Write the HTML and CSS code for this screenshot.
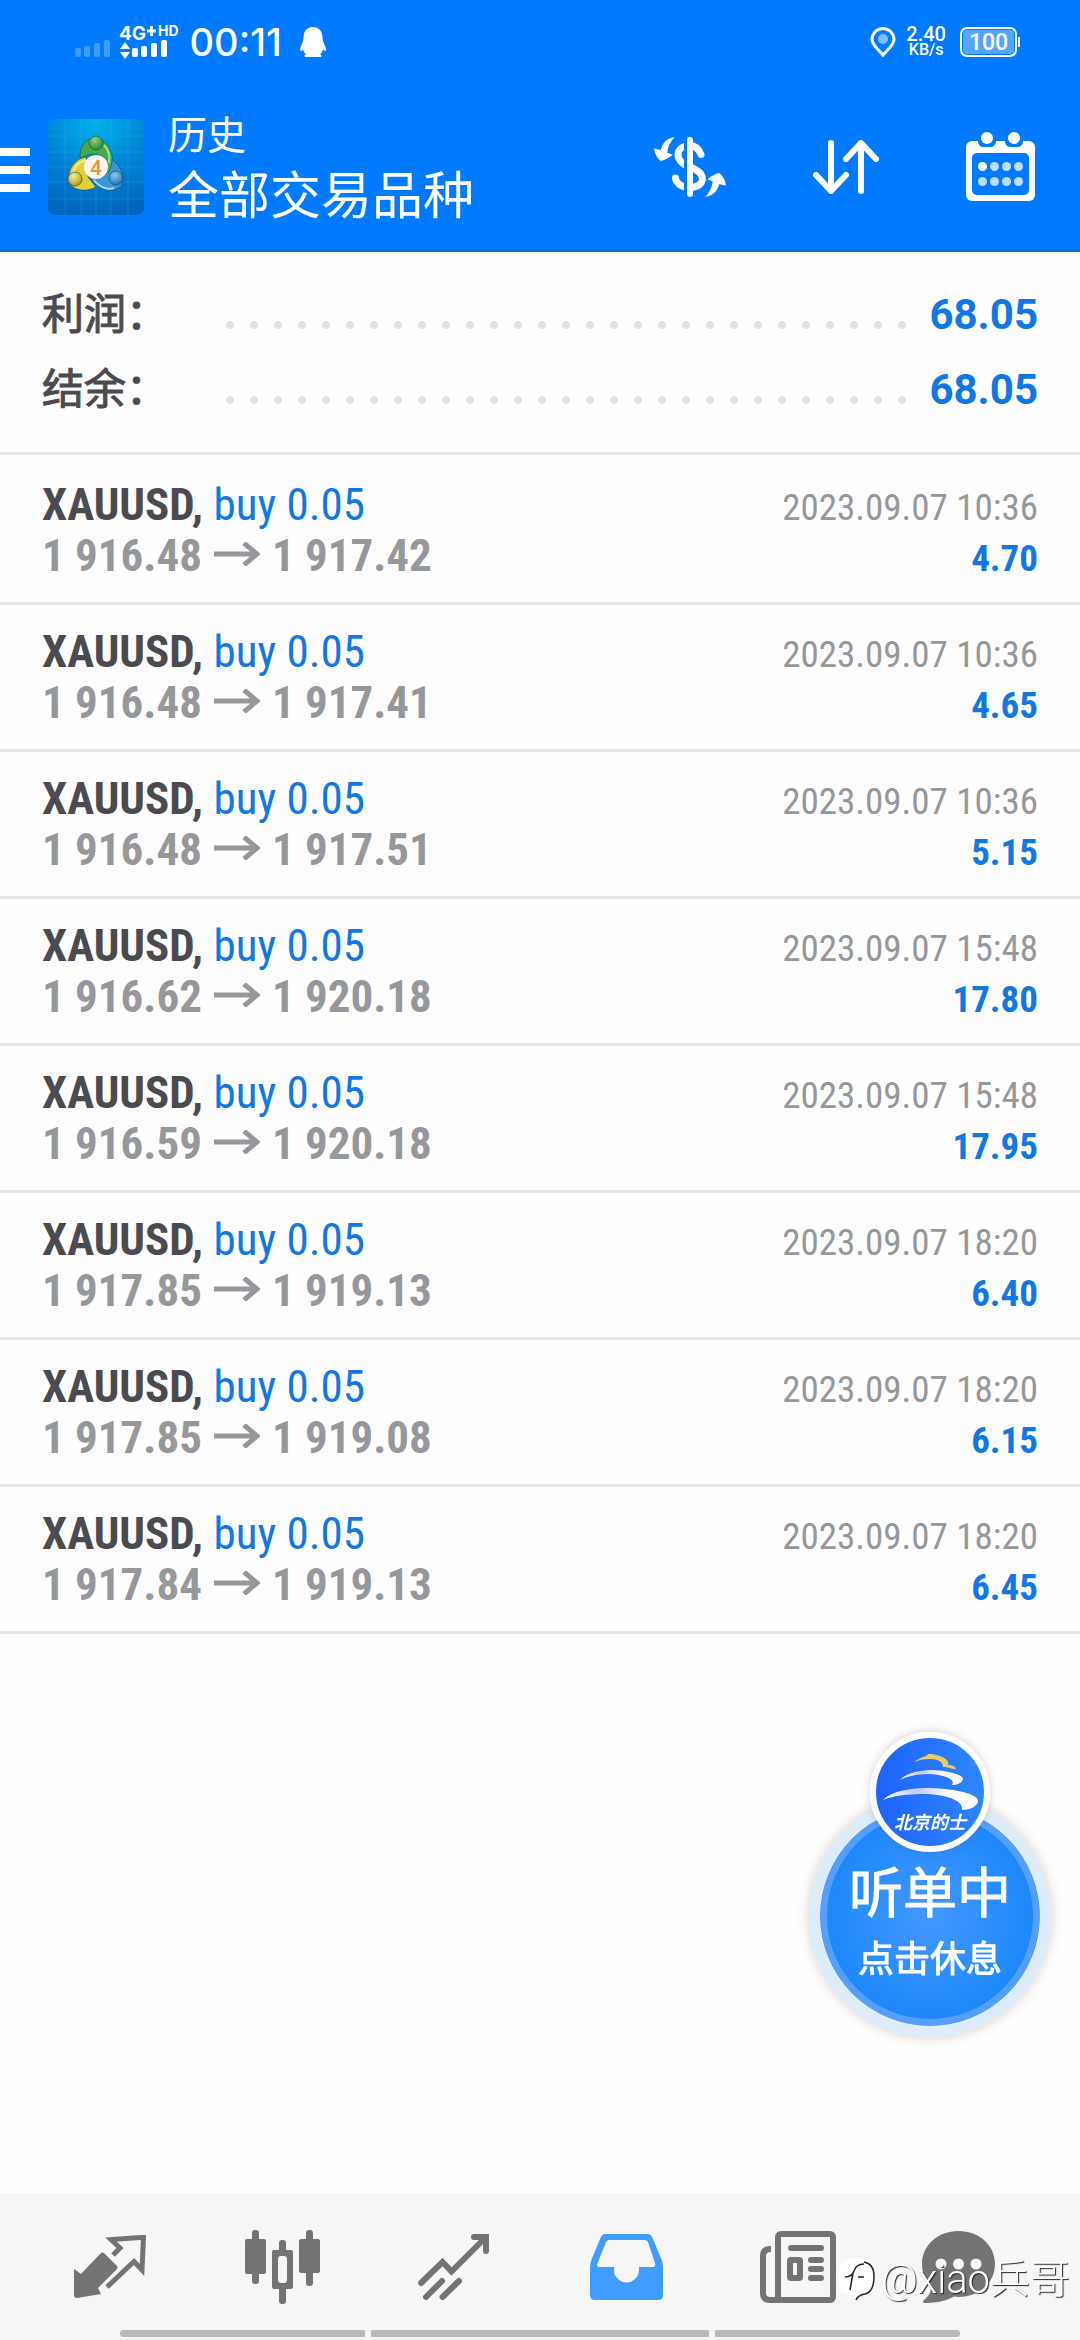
FILE: index.html
```
<!DOCTYPE html>
<html lang="zh-CN">
<head>
  <meta charset="UTF-8">
  <meta name="viewport" content="width=device-width, initial-scale=1">
  <title>历史</title>
  <link rel="stylesheet" href="styles.css">
</head>
<body>
  <header class="header">
    <!-- Status bar -->
    <div class="status">
      <svg class="signal" width="92" height="44" viewBox="0 -4 92 44" fill="#fff">
        <g opacity="0.25">
          <rect x="0" y="24" width="6" height="9" rx="2"/>
          <rect x="9" y="22" width="6" height="11" rx="2"/>
          <rect x="19" y="19" width="6" height="14" rx="2"/>
          <rect x="29" y="16" width="6" height="17" rx="2"/>
        </g>
        <text x="44" y="16" class="net">4G</text>
        <path d="M72 7h9M76.500 2v10" stroke="#fff" stroke-width="3"/>
        <path d="M45 25l5-7 5 7zM45 28l5 7 5-7z"/>
        <rect x="57" y="24" width="6" height="9" rx="2"/>
        <rect x="66" y="22" width="6" height="11" rx="2"/>
        <rect x="76" y="19" width="6" height="14" rx="2"/>
        <rect x="86" y="16" width="6" height="17" rx="2"/>
      </svg>
      <span class="hd">HD</span>
      <span class="time">00:11</span>
      <svg width="27" height="30" viewBox="0 0 27 30" fill="#fff">
        <path d="M13 0C19 0 22.500 4 22.500 11C22.500 14 24 16 25 19C26.500 22 26 24 25 24C24 24 23.500 23 23 22C22.500 25 21.500 26 20 27.500C22 28 22 30 20 30H6C4 30 4 28 6 27.500C4.500 26 3.500 25 3 22C2.500 23 2 24 1 24C0 24 0 22 1 19C2 16 3.500 14 3.500 11C3.500 4 7 0 13 0Z"/>
      </svg>
      <svg class="pin" width="26" height="30" viewBox="0 0 26 30">
        <path d="M13 28C9 23 2 18 2 12.500A11 11 0 0 1 24 12.500C24 18 17 23 13 28Z" fill="none" stroke="#fff" stroke-width="3"/>
        <circle cx="13" cy="12" r="5" fill="#80bdff"/>
      </svg>
      <span class="speed">2.40<small>KB/s</small></span>
      <span class="battery">100</span>
    </div>

    <!-- App bar -->
    <div class="appbar">
      <button class="menu" aria-label="菜单"><i></i><i></i><i></i></button>
      <svg class="logo" width="96" height="96" viewBox="0 0 96 96">
        <defs>
          <radialGradient id="logoBg" cx="0.5" cy="0" r="1">
            <stop offset="0" stop-color="#00b4ea"/>
            <stop offset="0.6" stop-color="#0080d4"/>
            <stop offset="1" stop-color="#0066bd"/>
          </radialGradient>
          <radialGradient id="gGreen" cx="0.4" cy="0.3" r="0.8">
            <stop offset="0" stop-color="#8fd27e"/><stop offset="1" stop-color="#1c7c38"/>
          </radialGradient>
          <radialGradient id="gYellow" cx="0.4" cy="0.3" r="0.8">
            <stop offset="0" stop-color="#f7ee8e"/><stop offset="1" stop-color="#a8920c"/>
          </radialGradient>
          <radialGradient id="gBlue" cx="0.4" cy="0.3" r="0.8">
            <stop offset="0" stop-color="#8cccf2"/><stop offset="1" stop-color="#1265ac"/>
          </radialGradient>
        </defs>
        <rect width="96" height="96" rx="7" fill="url(#logoBg)"/>
        <path d="M0 17h96M0 33h96M0 48h96M0 63h96M0 80h96M17 0v96M33 0v96M48 0v96M63 0v96M80 0v96" stroke="#5cc8f0" stroke-opacity="0.2"/>
        <g stroke="#0b4d63" stroke-opacity="0.6">
          <path d="M38 38C28 39 19 50 21 62C23 71 37 74 48 68L40 58Z" fill="#e0cf38"/>
          <path d="M38 41C30 43 25 49 25 56" fill="none" stroke="#f8f0a0" stroke-opacity="0.9" stroke-width="2"/>
          <path d="M58 38C70 41 77 54 74 65C69 75 50 74 41 57L55 58Z" fill="#3b96d9"/>
          <path d="M46 61C52 69 60 71 66 69" fill="none" stroke="#b0defa" stroke-opacity="0.9" stroke-width="2"/>
          <path d="M32 38C32 24 40 19 48 19C58 20 66 32 64 43C63 52 58 57 52 59L58 42C52 34 42 33 34 39Z" fill="#4aa84c"/>
          <path d="M56 26C61 31 62 38 61 44" fill="none" stroke="#aee59c" stroke-opacity="0.9" stroke-width="2"/>
          <circle cx="48" cy="24" r="7" fill="url(#gGreen)"/>
          <circle cx="27" cy="60" r="7" fill="url(#gYellow)"/>
          <circle cx="68" cy="59" r="7" fill="url(#gBlue)"/>
        </g>
        <circle cx="48" cy="48" r="12" fill="#f7f4f1"/>
        <text x="48" y="56" class="logo-num">4</text>
      </svg>
      <h1 class="title"><small>历史</small>全部交易品种</h1>
      <div class="actions">
        <button aria-label="货币">
          <svg width="72" height="60" viewBox="0 0 72 60">
            <path d="M47 17.500C44 10 40 8.500 36 8.500C20 9 20 25 36 30C54 36 51 50.500 36 50.500C27 50.500 22 46 21.500 41" fill="none" stroke="#fff" stroke-width="7" stroke-linecap="round"/>
            <rect x="30" y="0" width="4" height="60" fill="#007aff"/>
            <rect x="33" y="0" width="6" height="60" rx="3" fill="#fff"/>
            <path id="swing" d="M20.700 0.300C14 0.500 8.500 5.500 6.700 13L0 11.300C0.700 17 3 21 6.700 24C10 23.300 15 21 18.700 17.700L13.300 15.700C14 10 16 5 20.700 0.300Z" fill="#fff"/>
            <use href="#swing" transform="rotate(180 36 30)"/>
          </svg>
        </button>
        <button aria-label="排序">
          <svg width="66" height="54" viewBox="0 0 66 54" fill="none" stroke="#fff" stroke-width="6" stroke-linecap="round" stroke-linejoin="round">
            <path d="M18 3V51M3 35L18 51L33 35M48 51V3M33 19L48 3L63 19"/>
          </svg>
        </button>
        <button aria-label="日期">
          <svg width="69" height="69" viewBox="0 0 69 69">
            <rect y="9" width="69" height="60" rx="6" fill="#fff"/>
            <path d="M12 9H30V10A6 6 0 0 1 24 15H18A6 6 0 0 1 12 10ZM39 9H57V10A6 6 0 0 1 51 15H45A6 6 0 0 1 39 10Z" fill="#007aff"/>
            <rect x="6" y="21" width="57" height="42" rx="5" fill="#007aff"/>
            <g fill="#fff">
              <circle cx="21" cy="6" r="6"/><circle cx="48" cy="6" r="6"/>
              <circle cx="16.500" cy="34.500" r="4.500"/>
            </g>
            <g fill="#bfdeff">
              <circle cx="28.500" cy="34.500" r="4.500"/><circle cx="40.500" cy="34.500" r="4.500"/><circle cx="52.500" cy="34.500" r="4.500"/>
              <circle cx="16.500" cy="49.500" r="4.500"/><circle cx="28.500" cy="49.500" r="4.500"/><circle cx="40.500" cy="49.500" r="4.500"/><circle cx="52.500" cy="49.500" r="4.500"/>
            </g>
          </svg>
        </button>
      </div>
    </div>
  </header>

  <main>
    <dl class="summary">
      <div class="sum-row"><dt>利润：</dt><dd class="dots"></dd><dd class="sum-value">68.05</dd></div>
      <div class="sum-row"><dt>结余：</dt><dd class="dots"></dd><dd class="sum-value">68.05</dd></div>
    </dl>

    <ul class="deals">
      <li class="deal">
        <div class="line"><span class="symbol">XAUUSD, <span class="side">buy 0.05</span></span><time>2023.09.07 10:36</time></div>
        <div class="line"><span class="price">1 916.48<svg class="arrow" viewBox="0 0 46 24"><path d="M0 12H42M30 1L43 12L30 23"/></svg>1 917.42</span><span class="profit">4.70</span></div>
      </li>
      <li class="deal">
        <div class="line"><span class="symbol">XAUUSD, <span class="side">buy 0.05</span></span><time>2023.09.07 10:36</time></div>
        <div class="line"><span class="price">1 916.48<svg class="arrow" viewBox="0 0 46 24"><path d="M0 12H42M30 1L43 12L30 23"/></svg>1 917.41</span><span class="profit">4.65</span></div>
      </li>
      <li class="deal">
        <div class="line"><span class="symbol">XAUUSD, <span class="side">buy 0.05</span></span><time>2023.09.07 10:36</time></div>
        <div class="line"><span class="price">1 916.48<svg class="arrow" viewBox="0 0 46 24"><path d="M0 12H42M30 1L43 12L30 23"/></svg>1 917.51</span><span class="profit">5.15</span></div>
      </li>
      <li class="deal">
        <div class="line"><span class="symbol">XAUUSD, <span class="side">buy 0.05</span></span><time>2023.09.07 15:48</time></div>
        <div class="line"><span class="price">1 916.62<svg class="arrow" viewBox="0 0 46 24"><path d="M0 12H42M30 1L43 12L30 23"/></svg>1 920.18</span><span class="profit">17.80</span></div>
      </li>
      <li class="deal">
        <div class="line"><span class="symbol">XAUUSD, <span class="side">buy 0.05</span></span><time>2023.09.07 15:48</time></div>
        <div class="line"><span class="price">1 916.59<svg class="arrow" viewBox="0 0 46 24"><path d="M0 12H42M30 1L43 12L30 23"/></svg>1 920.18</span><span class="profit">17.95</span></div>
      </li>
      <li class="deal">
        <div class="line"><span class="symbol">XAUUSD, <span class="side">buy 0.05</span></span><time>2023.09.07 18:20</time></div>
        <div class="line"><span class="price">1 917.85<svg class="arrow" viewBox="0 0 46 24"><path d="M0 12H42M30 1L43 12L30 23"/></svg>1 919.13</span><span class="profit">6.40</span></div>
      </li>
      <li class="deal">
        <div class="line"><span class="symbol">XAUUSD, <span class="side">buy 0.05</span></span><time>2023.09.07 18:20</time></div>
        <div class="line"><span class="price">1 917.85<svg class="arrow" viewBox="0 0 46 24"><path d="M0 12H42M30 1L43 12L30 23"/></svg>1 919.08</span><span class="profit">6.15</span></div>
      </li>
      <li class="deal">
        <div class="line"><span class="symbol">XAUUSD, <span class="side">buy 0.05</span></span><time>2023.09.07 18:20</time></div>
        <div class="line"><span class="price">1 917.84<svg class="arrow" viewBox="0 0 46 24"><path d="M0 12H42M30 1L43 12L30 23"/></svg>1 919.13</span><span class="profit">6.45</span></div>
      </li>
    </ul>
  </main>

  <!-- Floating taxi button -->
  <button class="fab">
    <svg class="badge" viewBox="0 0 108 108">
      <defs>
        <linearGradient id="sweep">
          <stop offset="0" stop-color="#fff"/><stop offset="0.35" stop-color="#c3c8f6"/><stop offset="0.7" stop-color="#fff"/>
        </linearGradient>
      </defs>
      <path d="M38 24C46 18 51 19 52 16H56C68 18 74 23 72 27C76 27 79 28 80 31C76 32 74 29 67 29C67 24 62 21 54 21C48 21 43 22 38 24Z" fill="#e9cb62"/>
      <path d="M24 42C31 34 47 32 57 32C74 33 87 37 87 41C86 45 81 47 76 47C80 42 70 37 54 36C40 36 29 39 24 42Z" fill="url(#sweep)"/>
      <path d="M7 62C17 52 37 50 54 50C81 51 102 56 102 63C102 68 94 72 86 72C88 64 74 57 51 56C31 56 16 58 7 62Z" fill="url(#sweep)"/>
      <text x="54" y="91" class="badge-text">北京的士</text>
    </svg>
    <span class="fab-state">听单中</span>
    <span class="fab-hint">点击休息</span>
  </button>

  <nav class="tabs">
    <a href="#quotes" aria-label="行情">
      <svg width="72" height="63" viewBox="0 0 72 63">
        <path d="M0 34L7 39L27 18Q28.500 17 30 18L43 31Q44 32.500 43 34L24 53L27 59L3 63Q0 63 0 60Z" fill="#737373"/>
        <path d="M39 20L46 13L37 4.500L69.500 2.300L68 35L60 26.500L33 52" fill="none" stroke="#737373" stroke-width="5"/>
      </svg>
    </a>
    <a href="#chart" aria-label="图表">
      <svg width="75" height="74" viewBox="0 0 75 74" fill="#737373">
        <rect x="7" y="0" width="7" height="54" rx="3"/><rect x="0" y="9" width="21" height="35" rx="2"/>
        <rect x="61" y="0" width="7" height="56" rx="3"/><rect x="54" y="9" width="21" height="34" rx="2"/>
        <rect x="34" y="10" width="7" height="64" rx="3"/><rect x="27" y="20" width="21" height="39" rx="2"/>
        <rect x="33" y="26" width="9" height="27" rx="3" fill="#f6f6f6"/>
      </svg>
    </a>
    <a href="#trade" aria-label="交易">
      <svg width="72" height="66" viewBox="0 0 72 66" fill="none" stroke="#737373" stroke-width="6" stroke-linecap="round">
        <path d="M3 49L24.500 28L33.500 37.500L67.500 3.500M56 3H68V17M8 63L24 47M24.500 63L41 47"/>
      </svg>
    </a>
    <a href="#history" aria-label="历史" aria-current="page">
      <svg width="73" height="66" viewBox="0 0 73 66">
        <path fill="#409cff" fill-rule="evenodd" d="M15 0H58Q61 0 63 5L70 22Q73 28 73 33V61Q73 66 68 66H5Q0 66 0 61V33Q0 28 3 22L10 5Q12 0 15 0ZM19 6Q17 6 16 8L7.500 29Q6.500 33 9 33H24V36A12.500 12.500 0 0 0 49 36V33H63Q66 33 65 29L58 8Q57 6 55 6Z"/>
      </svg>
    </a>
    <a href="#news" aria-label="新闻">
      <svg width="76" height="72" viewBox="0 0 76 72" fill="none" stroke="#737373" stroke-width="6">
        <rect x="18" y="3" width="55" height="66" rx="3"/>
        <path d="M11 18Q3 18 3 25V62Q3 69 10 69H20"/>
        <path d="M31 17H61M51 29H61M51 38H61M51 47H61" stroke-linecap="round"/>
        <rect x="30" y="29" width="10" height="18" rx="1"/>
      </svg>
    </a>
    <a href="#chat" aria-label="消息">
      <svg width="73" height="72" viewBox="0 0 73 72">
        <path d="M36.500 0C57 0 73 14 73 33S57 66 36.500 66L32 65.500C24 70 14 72 2 72Q0 71 2 69C7 65 9 61 9 56C3 50 0 42 0 33C0 14 16 0 36.500 0Z" fill="#737373"/>
        <g fill="#f6f6f6"><circle cx="19" cy="33" r="5.500"/><circle cx="36.500" cy="33" r="5.500"/><circle cx="54" cy="33" r="5.500"/></g>
      </svg>
    </a>
    <div class="home-bars"><i></i><i></i><i></i></div>
  </nav>

  <div class="author-tag">
    <svg width="37" height="44" viewBox="0 0 37 44">
      <path d="M12 1Q37 -3 37 18Q37 36 27 37Q20 38 18 43Q14 37 7 36Q0 35 0 20Q0 3 12 1Z" fill="#fff"/>
      <path d="M26 4Q36 6 36 18Q36 34 27 36Q20 37 18 42M7 19Q14 19 16 13Q18 6 26 6M15 15L12 32M20 19H26" fill="none" stroke="#222" stroke-width="1.500"/>
    </svg>
    @xiao兵哥
  </div>
</body>
</html>
```
FILE: styles.css
```
* {
  box-sizing: border-box;
}

body {
  margin: 0;
  min-height: 100vh;
  display: flex;
  flex-direction: column;
  font-family: Roboto, "Noto Sans CJK SC", sans-serif;
  background: #fefefe;
}

button {
  padding: 0;
  border: none;
  background: none;
  font-family: inherit;
  cursor: pointer;
}

svg {
  display: block;
}

/* header */
.header {
  background: #007aff;
  color: #fff;
  border-bottom: 3px solid #0f6fd8;
}

.status {
  display: flex;
  align-items: center;
  height: 84px;
  padding: 0 63px 0 75px;
  font-family: Inter, sans-serif;
}

.net {
  font-size: 19px;
  font-weight: 700;
}

.hd {
  align-self: flex-start;
  margin-top: 22px;
  margin-left: -9px;
  font-size: 14px;
  line-height: 17px;
  font-weight: 700;
}

.time {
  margin: 0 18px 0 11px;
  font-size: 38px;
  font-weight: 500;
}

.pin {
  margin-left: auto;
}

.speed {
  margin: 0 14px 0 10px;
  font-family: Roboto, sans-serif;
  font-size: 20px;
  line-height: 16px;
  font-weight: 500;
  text-align: center;
}

.speed small {
  display: block;
  font-size: 16px;
}

.battery {
  position: relative;
  width: 57px;
  height: 30px;
  border: 2px solid #fff;
  border-radius: 7px;
  background: #55a6ff;
  box-shadow: inset 0 0 0 1px #007aff;
  font-family: Roboto, sans-serif;
  font-size: 23px;
  line-height: 27px;
  font-weight: 500;
  text-align: center;
}

.battery::after {
  content: "";
  position: absolute;
  right: -5px;
  top: 8px;
  width: 2px;
  height: 10px;
  background: #fff;
}

.appbar {
  display: flex;
  align-items: center;
  height: 165px;
  padding-right: 45px;
}

.menu {
  display: flex;
  flex-direction: column;
  gap: 10px;
  width: 30px;
  margin: 6px 18px 0 0;
}

.menu i {
  height: 8px;
  background: #fff;
}

.logo-num {
  font-size: 21px;
  font-weight: 500;
  text-anchor: middle;
  fill: #f0953c;
}

.title {
  margin: 0 0 3px 24px;
  font-size: 51px;
  line-height: 66px;
  font-weight: 400;
  font-family: "Noto Sans CJK SC", sans-serif;
}

.title small {
  display: block;
  font-size: 39px;
  line-height: 54px;
}

.actions {
  display: flex;
  align-items: center;
  gap: 87px;
  margin-left: auto;
}

/* totals */
.summary {
  margin: 0;
  padding: 21px 42px 29px;
  border-bottom: 3px solid #e4e4e4;
}

.sum-row {
  display: flex;
  align-items: baseline;
  height: 75px;
  line-height: 75px;
  font-size: 42px;
}

/* thin stroke gives the medium weight */
.sum-row dt {
  width: 176px;
  color: #4b4a4f;
  font-family: "Noto Sans CJK SC", sans-serif;
  -webkit-text-stroke: 1px #4b4a4f;
}

.sum-row dd {
  margin: 0;
}

.sum-row .dots {
  flex: 1;
  height: 8px;
  margin: 0 16px 4px 0;
  background: radial-gradient(circle, #e2e2e2 4px, transparent 4px) 0 0 / 24px 8px repeat-x;
}

.sum-value {
  color: #1177e4;
  font-weight: 700;
}

/* deals */
.deals {
  margin: 0;
  padding: 3px 0 0;
  list-style: none;
  font-family: "Roboto Condensed", Roboto, sans-serif;
  font-size: 45px;
  line-height: 51px;
}

.deal {
  padding: 21px 42px;
  border-bottom: 3px solid #e4e4e4;
}

.line {
  display: flex;
  justify-content: space-between;
  align-items: baseline;
  height: 51px;
}

.symbol {
  color: #4b4a4f;
  font-weight: 700;
}

.side {
  color: #1177e4;
  font-weight: 400;
}

.price {
  color: #96979a;
  font-weight: 700;
}

.arrow {
  display: inline-block;
  width: 46px;
  height: 24px;
  margin: 0 12px;
  vertical-align: 5px;
  fill: none;
  stroke: #96979a;
  stroke-width: 5px;
}

.line time {
  color: #96979a;
  font-size: 37px;
}

.profit {
  color: #1177e4;
  font-size: 37px;
  font-weight: 700;
}

/* floating button */
.fab {
  position: fixed;
  right: 29px;
  bottom: 303px;
  display: flex;
  flex-direction: column;
  align-items: center;
  width: 242px;
  height: 242px;
  padding-top: 48px;
  border: 11px solid #dcecfa;
  border-radius: 50%;
  background: radial-gradient(circle, #4598ff, #1e88fa 65%) padding-box;
  box-shadow: inset 0 0 0 7px #559ffa, 0 0 12px rgba(110, 80, 70, 0.3);
  color: #fff;
  font-family: "Noto Sans CJK SC", sans-serif;
  -webkit-text-stroke: 1px #fff;
}

.badge {
  position: absolute;
  top: -74px;
  width: 120px;
  height: 120px;
  border: 6px solid #fff;
  border-radius: 50%;
  background: linear-gradient(90deg, #1f62fb, #2f86fd);
  box-shadow: 0 -1px 8px rgba(110, 80, 70, 0.25);
}

.badge-text {
  font-size: 18px;
  font-weight: 700;
  font-style: italic;
  text-anchor: middle;
  fill: #fff;
  -webkit-text-stroke: 0;
}

.fab-state {
  font-size: 54px;
  line-height: 72px;
}

.fab-hint {
  font-size: 36px;
  line-height: 60px;
}

/* bottom tabs */
.tabs {
  position: relative;
  display: grid;
  grid-template-columns: repeat(5, 172fr) 148fr;
  align-items: center;
  justify-items: center;
  height: 147px;
  margin-top: auto;
  padding: 0 48px 0 24px;
  background: #f6f6f6;
}

.home-bars {
  position: absolute;
  left: 120px;
  right: 120px;
  bottom: 3px;
  display: grid;
  grid-template-columns: 245fr 338fr 245fr;
  gap: 6px;
}

.home-bars i {
  height: 7px;
  background: #b9b9b9;
}

.home-bars i:first-child {
  border-radius: 4px 0 0 4px;
}

.home-bars i:last-child {
  border-radius: 0 4px 4px 0;
}

.author-tag {
  position: fixed;
  right: 10px;
  bottom: 36px;
  display: flex;
  align-items: center;
  gap: 6px;
  color: #fff;
  font-family: Roboto, "Noto Sans CJK SC", sans-serif;
  font-size: 40px;
  line-height: 48px;
  font-weight: 300;
  text-shadow: 1px 1px 1px #222;
}
```
